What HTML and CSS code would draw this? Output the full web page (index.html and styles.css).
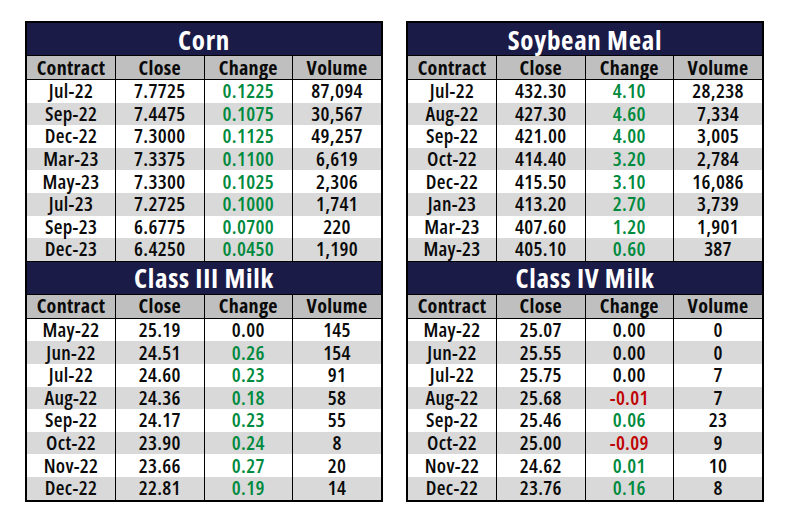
FILE: index.html
```html
<!DOCTYPE html>
<html>
<head>
<meta charset="utf-8">
<link rel="stylesheet" href="styles.css">
</head>
<body>
<div class="page">
  <div class="panel">
    <table class="quotes">
      <tr class="title"><th colspan="4">Corn</th></tr>
      <tr class="head"><th>Contract</th><th>Close</th><th>Change</th><th>Volume</th></tr>
      <tr><td>Jul-22</td><td>7.7725</td><td class="up">0.1225</td><td>87,094</td></tr>
      <tr><td>Sep-22</td><td>7.4475</td><td class="up">0.1075</td><td>30,567</td></tr>
      <tr><td>Dec-22</td><td>7.3000</td><td class="up">0.1125</td><td>49,257</td></tr>
      <tr><td>Mar-23</td><td>7.3375</td><td class="up">0.1100</td><td>6,619</td></tr>
      <tr><td>May-23</td><td>7.3300</td><td class="up">0.1025</td><td>2,306</td></tr>
      <tr><td>Jul-23</td><td>7.2725</td><td class="up">0.1000</td><td>1,741</td></tr>
      <tr><td>Sep-23</td><td>6.6775</td><td class="up">0.0700</td><td>220</td></tr>
      <tr><td>Dec-23</td><td>6.4250</td><td class="up">0.0450</td><td>1,190</td></tr>
      <tr class="title"><th colspan="4">Class III Milk</th></tr>
      <tr class="head"><th>Contract</th><th>Close</th><th>Change</th><th>Volume</th></tr>
      <tr><td>May-22</td><td>25.19</td><td>0.00</td><td>145</td></tr>
      <tr><td>Jun-22</td><td>24.51</td><td class="up">0.26</td><td>154</td></tr>
      <tr><td>Jul-22</td><td>24.60</td><td class="up">0.23</td><td>91</td></tr>
      <tr><td>Aug-22</td><td>24.36</td><td class="up">0.18</td><td>58</td></tr>
      <tr><td>Sep-22</td><td>24.17</td><td class="up">0.23</td><td>55</td></tr>
      <tr><td>Oct-22</td><td>23.90</td><td class="up">0.24</td><td>8</td></tr>
      <tr><td>Nov-22</td><td>23.66</td><td class="up">0.27</td><td>20</td></tr>
      <tr><td>Dec-22</td><td>22.81</td><td class="up">0.19</td><td>14</td></tr>
    </table>
  </div>
  <div class="panel">
    <table class="quotes">
      <tr class="title"><th colspan="4">Soybean Meal</th></tr>
      <tr class="head"><th>Contract</th><th>Close</th><th>Change</th><th>Volume</th></tr>
      <tr><td>Jul-22</td><td>432.30</td><td class="up">4.10</td><td>28,238</td></tr>
      <tr><td>Aug-22</td><td>427.30</td><td class="up">4.60</td><td>7,334</td></tr>
      <tr><td>Sep-22</td><td>421.00</td><td class="up">4.00</td><td>3,005</td></tr>
      <tr><td>Oct-22</td><td>414.40</td><td class="up">3.20</td><td>2,784</td></tr>
      <tr><td>Dec-22</td><td>415.50</td><td class="up">3.10</td><td>16,086</td></tr>
      <tr><td>Jan-23</td><td>413.20</td><td class="up">2.70</td><td>3,739</td></tr>
      <tr><td>Mar-23</td><td>407.60</td><td class="up">1.20</td><td>1,901</td></tr>
      <tr><td>May-23</td><td>405.10</td><td class="up">0.60</td><td>387</td></tr>
      <tr class="title"><th colspan="4">Class IV Milk</th></tr>
      <tr class="head"><th>Contract</th><th>Close</th><th>Change</th><th>Volume</th></tr>
      <tr><td>May-22</td><td>25.07</td><td>0.00</td><td>0</td></tr>
      <tr><td>Jun-22</td><td>25.55</td><td>0.00</td><td>0</td></tr>
      <tr><td>Jul-22</td><td>25.75</td><td>0.00</td><td>7</td></tr>
      <tr><td>Aug-22</td><td>25.68</td><td class="down">-0.01</td><td>7</td></tr>
      <tr><td>Sep-22</td><td>25.46</td><td class="up">0.06</td><td>23</td></tr>
      <tr><td>Oct-22</td><td>25.00</td><td class="down">-0.09</td><td>9</td></tr>
      <tr><td>Nov-22</td><td>24.62</td><td class="up">0.01</td><td>10</td></tr>
      <tr><td>Dec-22</td><td>23.76</td><td class="up">0.16</td><td>8</td></tr>
    </table>
  </div>
</div>
</body>
</html>
```

FILE: styles.css
```css
html, body {
  margin: 0;
  padding: 0;
  background: #ffffff;
}

.page {
  display: flex;
  gap: 23px;
  padding: 21px 0 0 25px;
  font-family: "Open Sans", "DejaVu Sans Condensed", sans-serif;
  font-stretch: condensed;
  color: #0a0a0a;
}

.panel {
  width: 354px;
  border: 2px solid #000000;
}

.quotes {
  width: 100%;
  border-collapse: collapse;
  table-layout: fixed;
}

.quotes th,
.quotes td {
  padding: 0;
  text-align: center;
  vertical-align: middle;
  white-space: nowrap;
}

.title th {
  background: #1b1b48;
  color: #ffffff;
  font-size: 27px;
  line-height: 31px;
  letter-spacing: 0.7px;
  font-weight: 700;
  height: 32px;
  border-bottom: 1px solid #000000;
  border-top: 1px solid #000000;
}

.quotes tr.title:first-child th {
  border-top: none;
}

.head th {
  background: #bfbfbf;
  font-size: 20px;
  line-height: 22px;
  letter-spacing: 0.3px;
  font-weight: 700;
  height: 23px;
  border: 1px solid #000000;
  border-top: none;
}

.quotes td {
  font-size: 20px;
  line-height: 22px;
  letter-spacing: 0.3px;
  font-weight: 600;
  height: 22.6px;
  border-left: 1px solid #000000;
  border-right: 1px solid #000000;
}

.quotes th:first-child,
.quotes td:first-child {
  border-left: none;
}

.quotes th:last-child,
.quotes td:last-child {
  border-right: none;
}

.quotes tr:nth-child(10n+4) td,
.quotes tr:nth-child(10n+6) td,
.quotes tr:nth-child(10n+8) td,
.quotes tr:nth-child(10n+10) td {
  background: #d9d9d9;
}

.quotes td.up {
  color: #008a3e;
}

.quotes td.down {
  color: #c00000;
}
```
